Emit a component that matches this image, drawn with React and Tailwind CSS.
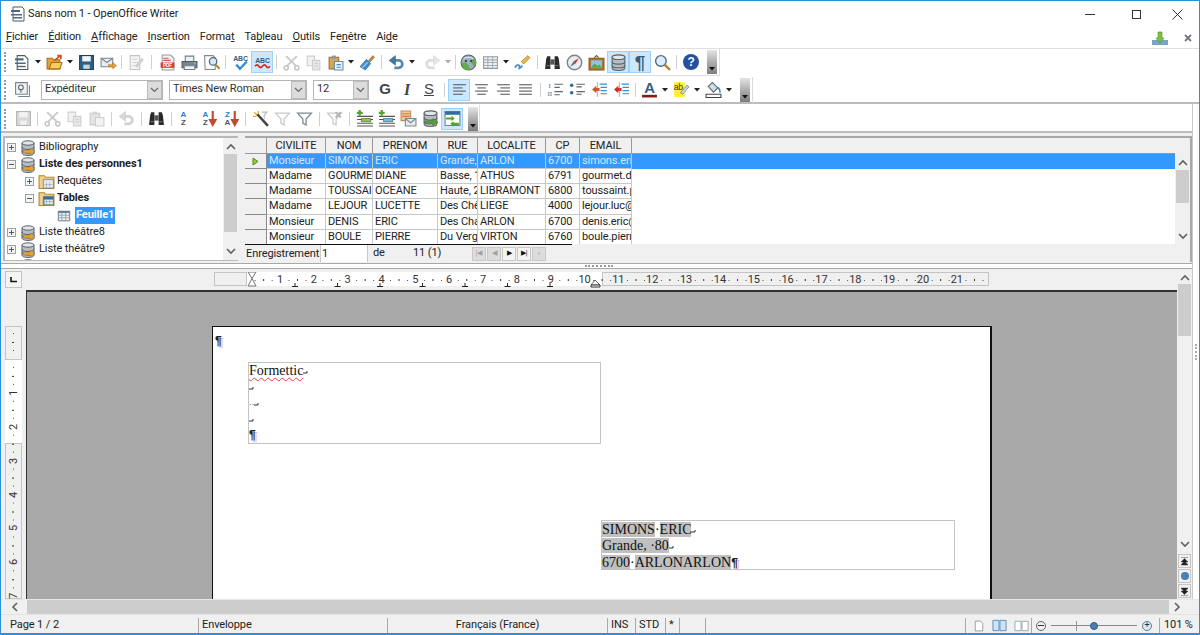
import React from 'react'
import clsx from 'clsx'

const S = ({ children, s = 17 }) => (
  <svg width={s} height={s} viewBox="0 0 16 16" className="block shrink-0">
    {children}
  </svg>
)

const Caret = ({ dim }) => (
  <div className="w-[10px] h-[22px] flex items-center justify-center">
    <svg width="6" height="4" viewBox="0 0 6 4">
      <path d="M0 0h6L3 3.5z" fill={dim ? '#aaa' : '#222'} />
    </svg>
  </div>
)

const Sep = ({ className }) => (
  <div className={clsx('flex justify-center h-[22px] items-center', className)}>
    <div className="w-px h-[14px] bg-[#cfcfcf]" />
  </div>
)

const Btn = ({ active, children, className }) => (
  <div
    className={clsx(
      'w-[22px] h-[22px] shrink-0 flex items-center justify-center',
      active && 'bg-[#cce8ff] border border-[#99d1ff]',
      className,
    )}
  >
    {children}
  </div>
)

const Handle = ({ className }) => (
  <div className={clsx('w-[10px] h-[24px] bg-gradient-to-b from-[#e4e4e4] to-[#7d7d7d] flex items-end justify-center pb-[3px]', className)}>
    <svg width="6" height="4" viewBox="0 0 6 4">
      <path d="M0 0h6L3 3.5z" fill="#111" />
    </svg>
  </div>
)

const Grip = () => (
  <div className="w-[3px] h-[20px] ml-[3px] mr-[4px] shrink-0 border-l-2 border-dotted border-[#9a9a9a]" />
)

const NewDoc = () => (
  <S>
    <path d="M3 1.5h7l3 3v10H3z" fill="#fff" stroke="#4a5a68" />
    <path d="M1 4h8v2H1zM1 8h10v1.5H1zM3 11h8v1.5H3z" fill="#51697e" />
  </S>
)
const Open = () => (
  <S>
    <path d="M1 4h5l1 1.5h6V14H1z" fill="#e2a13a" stroke="#a86f17" />
    <path d="M3 14l2-6h10l-2 6z" fill="#f7cb5f" stroke="#a86f17" />
    <path d="M8 6l5-4M10.5 1.5H14V5" stroke="#d8501e" strokeWidth="1.6" fill="none" />
  </S>
)
const Save = ({ dim }) => (
  <S>
    <path d="M1.5 1.5h13v13h-13z" fill={dim ? '#d8d8d8' : '#2e5f84'} stroke={dim ? '#b5b5b5' : '#20435f'} />
    <path d="M4 2h8v5H4z" fill={dim ? '#f2f2f2' : '#f2f6f9'} />
    <path d="M5 10h6v4H5z" fill={dim ? '#f2f2f2' : '#c6d4de'} />
  </S>
)
const Mail = () => (
  <S>
    <path d="M1 4h11v8H1z" fill="#e8edf0" stroke="#7b8790" />
    <path d="M1 4l5.5 4L12 4" fill="none" stroke="#7b8790" />
    <path d="M8 10h4V8l3.5 3-3.5 3v-2H8z" fill="#e7a22e" stroke="#a86f17" strokeWidth=".5" />
  </S>
)
const EditDoc = () => (
  <S>
    <path d="M3 1.5h9v13H3z" fill="#f4f4f4" stroke="#c4c4c4" />
    <path d="M5 5h5M5 8h5M5 11h3" stroke="#d0d0d0" />
    <path d="M8 11l6-7 1.5 1.5-6 7z" fill="#d6d6d6" stroke="#b5b5b5" strokeWidth=".5" />
  </S>
)
const Pdf = () => (
  <S>
    <path d="M3 1h8l3 3v11H3z" fill="#f4f4f4" stroke="#9a9a9a" />
    <path d="M1.5 8h13v5h-13z" fill="#d33c30" />
    <path d="M4 4h5M4 6h7" stroke="#c05a50" />
    <text x="8" y="12.3" fontSize="4.5" fontWeight="700" textAnchor="middle" fill="#fff" fontFamily="Liberation Sans">PDF</text>
  </S>
)
const Print = () => (
  <S>
    <path d="M4 2h8v5H4z" fill="#eef2f4" stroke="#6d7d89" />
    <path d="M1 7h14v6H1z" fill="#77858f" stroke="#4d5a63" />
    <path d="M3 11h10v3.5H3z" fill="#f2f2f2" stroke="#6d7d89" />
    <path d="M12 8.5h2" stroke="#8fe06c" />
  </S>
)
const Preview = () => (
  <S>
    <path d="M1.5 1.5h8l2 2v11h-9.500z" fill="#fff" stroke="#7d8a93" />
    <circle cx="9.500" cy="7" r="3.500" fill="#d3e9f7" stroke="#51697e" strokeWidth="1.200" />
    <path d="M12 10l3.500 4" stroke="#b4812e" strokeWidth="2" />
  </S>
)
const Spell = () => (
  <S>
    <text x="8" y="6.500" fontSize="6.500" fontWeight="700" textAnchor="middle" fill="#2e5f84" fontFamily="Liberation Sans">ABC</text>
    <path d="M4 10l3.500 4L14 7" stroke="#2f8fd8" strokeWidth="2.200" fill="none" />
  </S>
)
const AutoSpell = () => (
  <S>
    <text x="8" y="8" fontSize="6.500" fontWeight="700" textAnchor="middle" fill="#2e5f84" fontFamily="Liberation Sans">ABC</text>
    <path d="M1 11.500q2-2.500 3.500 0t3.500 0 3.500 0 3.500 0" stroke="#d8281e" strokeWidth="1.600" fill="none" />
  </S>
)
const Cut = () => (
  <S>
    <path d="M3 2l9 9M13 2l-9 9" stroke="#c9c9c9" strokeWidth="1.800" />
    <circle cx="3" cy="13" r="2" fill="none" stroke="#c4c4c4" strokeWidth="1.400" />
    <circle cx="13" cy="13" r="2" fill="none" stroke="#c4c4c4" strokeWidth="1.400" />
  </S>
)
const Copy = () => (
  <S>
    <path d="M2 2h7v9H2z" fill="#f2f2f2" stroke="#cdcdcd" />
    <path d="M7 6h7v9H7z" fill="#e6e6e6" stroke="#cdcdcd" />
    <path d="M9 9h3M9 11h3" stroke="#cdcdcd" />
  </S>
)
const Paste = ({ dim }) => (
  <S>
    <path d="M2 3h9v11H2z" fill={dim ? '#e4e4e4' : '#d9a655'} stroke={dim ? '#c9c9c9' : '#96702f'} />
    <path d="M4.500 1.500h4v3h-4z" fill={dim ? '#d2d2d2' : '#8b98a2'} />
    <path d="M7 7h8v8H7z" fill={dim ? '#f2f2f2' : '#eef4f8'} stroke={dim ? '#cdcdcd' : '#6b8aa2'} />
    {!dim && <path d="M9 10h4M9 12.500h4" stroke="#3a8fd0" />}
  </S>
)
const Brush = () => (
  <S>
    <path d="M9 6l4-4.500 1.500 1.500L10.500 7.500z" fill="#c08a3a" stroke="#805a20" strokeWidth=".5" />
    <path d="M1 12l6-7 4 4-5 6z" fill="#3f8fd0" stroke="#28608c" strokeWidth=".6" />
    <path d="M3 13l5-5" stroke="#a7d3f2" />
  </S>
)
const Undo = ({ dim }) => (
  <S>
    <path d="M5 6h5a3 3 0 0 1 0 7H6" fill="none" stroke={dim ? '#d2d2d2' : '#5a8ab4'} strokeWidth="2.600" />
    <path d="M7 1.500v9L1 6z" fill={dim ? '#d8d8d8' : '#3f78a8'} stroke={dim ? '#c4c4c4' : '#2e5f84'} strokeWidth=".5" />
  </S>
)
const Redo = () => (
  <S>
    <path d="M11 6H6a3 3 0 0 0 0 7h4" fill="none" stroke="#dcdcdc" strokeWidth="2.600" />
    <path d="M9 1.500v9L15 6z" fill="#e6e6e6" stroke="#cfcfcf" strokeWidth=".5" />
  </S>
)
const Globe = () => (
  <S>
    <circle cx="8" cy="8" r="7" fill="#9db0bc" stroke="#51626e" />
    <path d="M1.500 9q3-2 5 0t3 5q-1 1-2 1C4 15 1.500 12 1.500 9zM10 6q2-2 5-.5 .5 3-1 6-3-1-4-5.500z" fill="#62ad4a" />
    <path d="M3.500 4.500q4.500-3 9 0" stroke="#e6edf1" fill="none" />
    <circle cx="5.500" cy="6.500" r="1.100" fill="#3d4a54" />
    <circle cx="10.500" cy="6.500" r="1.100" fill="#3d4a54" />
  </S>
)
const TableI = () => (
  <S>
    <path d="M1.500 2.500h13v11h-13z" fill="#eef1f3" stroke="#8f9ba5" />
    <path d="M1.500 5.500h13M1.500 8h13M1.500 10.800h13M5.500 2.500v11M10 2.500v11" stroke="#a5afb7" />
  </S>
)
const Draw = () => (
  <S>
    <path d="M7 7l6-5.500 2 2-6 6z" fill="#f0b53d" stroke="#a06f1c" strokeWidth=".6" />
    <path d="M1 13q1-3 3-2.500T5 13t3-2" stroke="#3f8fd0" strokeWidth="1.600" fill="none" />
  </S>
)
const Binoculars = () => (
  <S>
    <path d="M1 14l1-9 1-3h3v12zM15 14l-1-9-1-3h-3v12z" fill="#2a2a2a" />
    <path d="M6 5h4v5H6z" fill="#555" />
    <path d="M2.500 11h3M10.500 11h3" stroke="#777" />
  </S>
)
const Compass = () => (
  <S>
    <circle cx="8" cy="8" r="6.800" fill="#e9edf0" stroke="#78868f" strokeWidth="1.300" />
    <path d="M12 4L7 7l2 2z" fill="#d8281e" />
    <path d="M4 12l3-5 2 2z" fill="#3f78a8" />
  </S>
)
const Frame = () => (
  <S>
    <path d="M1 4h14v11H1z" fill="#b07a33" stroke="#7c5218" />
    <path d="M3 6h10v7H3z" fill="#8ec4e8" />
    <path d="M3 13l3-4 3 2 2-1 2 3z" fill="#5ea640" />
    <path d="M6 3.500l2-2 2 2" stroke="#7c5218" fill="none" />
  </S>
)
const Db = ({ arrows, s }) => (
  <S s={s}>
    <path d="M2 3v10c0 1.500 2.500 2.500 6 2.500s6-1 6-2.500V3z" fill="#b5bcc2" stroke="#59636b" />
    <ellipse cx="8" cy="3" rx="6" ry="2.200" fill="#e2e6e9" stroke="#59636b" />
    <path d="M2 7c0 1.500 2.500 2.500 6 2.500S14 8.500 14 7M2 10.500c0 1.500 2.500 2.500 6 2.500s6-1 6-2.500" fill="none" stroke="#59636b" />
    {arrows && <path d="M3 10h7V8l5 3.500-5 3.500v-2H3z" fill={arrows} stroke="#555" strokeWidth=".3" />}
  </S>
)
const Pilcrow = () => (
  <span className="font-['Liberation_Sans'] text-[19px] leading-none font-bold text-[#3d5c74]">¶</span>
)
const Glass = () => (
  <S>
    <circle cx="6.500" cy="6.500" r="5" fill="#d9eefb" stroke="#51697e" strokeWidth="1.300" />
    <path d="M10 10l5 5" stroke="#b4812e" strokeWidth="2.200" />
  </S>
)
const Help = () => (
  <div className="w-[16px] h-[16px] rounded-full bg-[#24509e] flex items-center justify-center text-white text-[12px] font-bold leading-none font-['Liberation_Sans']">?</div>
)
const StyleI = () => (
  <S>
    <path d="M1.500 1.500h11v11h-11z" fill="#f2f2f2" stroke="#77848e" />
    <path d="M4 14.500h10.500V4" fill="none" stroke="#77848e" />
    <circle cx="6.500" cy="6" r="2.200" fill="none" stroke="#5a6a76" />
    <path d="M6.500 8v3" stroke="#5a6a76" />
  </S>
)
const Align = ({ w }) => (
  <S>
    {w.map((l, i) => (
      <path key={i} d={l} stroke="#666" strokeWidth="1.100" />
    ))}
  </S>
)
const Numbered = () => (
  <S>
    <text x="2.500" y="7" fontSize="6.500" fill="#2e6f9e" textAnchor="middle" fontFamily="Liberation Serif">I</text>
    <text x="2.500" y="14" fontSize="6.500" fill="#2e6f9e" textAnchor="middle" fontFamily="Liberation Serif">II</text>
    <path d="M7 3h8M7 6h5M7 10h8M7 13h5" stroke="#666" />
  </S>
)
const Bullets = () => (
  <S>
    <circle cx="2.500" cy="4" r="1.700" fill="#2e6f9e" />
    <circle cx="2.500" cy="11" r="1.700" fill="#2e6f9e" />
    <path d="M7 3h8M7 5.500h5M7 10h8M7 12.500h5" stroke="#666" />
  </S>
)
const Indent = ({ color = '#d8501e' }) => (
  <S>
    <path d="M1 8l4-3.500v2h3v3H5v2z" fill={color} />
    <path d="M8 3h7M9 6h6M9 9h6M9 12h6" stroke="#2f8fd8" strokeWidth="1.100" />
    <path d="M6 1v14" stroke="#888" strokeWidth=".6" />
  </S>
)
const FontColor = () => (
  <S>
    <text x="8" y="11" fontSize="14" fontWeight="700" textAnchor="middle" fill="#2e5f84" fontFamily="Liberation Sans">A</text>
    <path d="M1 13h14v2.500H1z" fill="#8b1a14" />
  </S>
)
const Highlight = () => (
  <S>
    <path d="M1 1h10v14H1z" fill="#ffec3d" />
    <text x="5" y="8" fontSize="8" textAnchor="middle" fill="#333" fontFamily="Liberation Sans">ab</text>
    <path d="M7 11l6-7 2 1.500-6 7z" fill="#cfd6db" stroke="#5a6a76" strokeWidth=".6" />
  </S>
)
const Bucket = () => (
  <S>
    <path d="M3 5l4-3.500 5 5-4 4z" fill="#d6dcdf" stroke="#5a6a76" />
    <path d="M12 6q2.500 2 2 5" stroke="#2f8fd8" strokeWidth="1.500" fill="none" />
    <path d="M1 12.500h14v3H1z" fill="#fff" stroke="#444" />
  </S>
)
const Sort = ({ a = 'A', b = 'Z', arrow }) => (
  <S>
    <text x="5" y="7" fontSize="7.500" fontWeight="700" textAnchor="middle" fill="#2f7fc0" fontFamily="Liberation Sans">{a}</text>
    <text x="5" y="14.500" fontSize="7.500" fontWeight="700" textAnchor="middle" fill="#555" fontFamily="Liberation Sans">{b}</text>
    {arrow && <path d="M12 1v9M9.500 9.500L12 14l2.500-4.500z" stroke="#c4492a" strokeWidth="2" fill="#c4492a" />}
  </S>
)
const Wand = () => (
  <S>
    <path d="M2 2l3 3M6 1v3M1 6h3" stroke="#e2b030" strokeWidth="1.200" />
    <path d="M5 4l10 11" stroke="#444" strokeWidth="2.400" />
    <path d="M9 2h5l-2.500 3v4" stroke="#b5bcc2" fill="none" />
  </S>
)
const Funnel = ({ dim, x }) => (
  <S>
    <path d="M1.500 3h13L9.500 8.500V14l-3-1.500v-4z" fill="#fff" stroke={dim ? '#c9c9c9' : '#7d8a93'} strokeWidth="1.200" />
    {x && <path d="M9 2l5 5M14 2l-5 5" stroke="#b5b5b5" strokeWidth="1.800" />}
  </S>
)
const ListAdd = ({ color = '#8cc63f' }) => (
  <S>
    <path d="M1 6h15M1 9h15M1 12.500h15M1 15h15" stroke="#555" />
    <path d="M5 8h9v3H5z" fill={color} stroke="#444" strokeWidth=".5" />
    <path d="M3.500 0v5.500M.8 2.700h5.500" stroke="#4fa528" strokeWidth="2" />
  </S>
)
const MergeMail = () => (
  <S>
    <path d="M1 1h9v9H1z" fill="#f3c79b" stroke="#c08a5a" />
    <path d="M2 3.500h7M2 6h7" stroke="#d07a3a" />
    <path d="M5 8h10v7H5z" fill="#e6ebee" stroke="#7b8790" />
    <path d="M5 8l5 4 5-4" fill="none" stroke="#7b8790" />
  </S>
)
const Exchange = () => (
  <S>
    <path d="M1 1.500h14v13H1z" fill="#fff" stroke="#708090" />
    <path d="M1 1.500h14v3H1z" fill="#2e6f9e" />
    <path d="M2 7h5V5.500L10 8 7 10.500V9H2zM14 12H9v-1.500L6 13l3 2.500V14h5z" fill="#4fa528" />
  </S>
)

const Combo = ({ value, className }) => (
  <div className={clsx('h-[20px] flex items-center border border-[#b5b5b5] bg-white shrink-0', className)}>
    <span className="pl-[3px] flex-1 truncate text-[#333]">{value}</span>
    <div className="w-[15px] h-[18px] bg-[#dcdcdc] border border-[#bcbcbc] flex items-center justify-center">
      <svg width="9" height="6" viewBox="0 0 9 6">
        <path d="M1 1l3.500 3.500L8 1" fill="none" stroke="#666" strokeWidth="1.200" />
      </svg>
    </div>
  </div>
)

const Chevron = ({ dir = 'down' }) => (
  <svg width="10" height="7" viewBox="0 0 10 7" className="block">
    <path d={dir === 'up' ? 'M1 6l4-4 4 4' : 'M1 1l4 4 4-4'} fill="none" stroke="#606060" strokeWidth="1.600" />
  </svg>
)

const Plus = ({ open }) => (
  <div className="w-[9px] h-[9px] border border-[#a0a0a0] bg-[#f4f4f4] flex items-center justify-center shrink-0">
    <svg width="7" height="7" viewBox="0 0 7 7">
      <path d={open ? 'M1 3.500h5' : 'M1 3.500h5M3.500 1v5'} stroke="#3a5f80" />
    </svg>
  </div>
)

const Folder = ({ inner }) => (
  <S s={17}>
    <path d="M1 2.500h5l1 1.500h8v10.500H1z" fill="#f2d28a" stroke="#b3862f" />
    <path d="M5 6h9.500v8H5z" fill={inner ? '#2e6f9e' : '#dfe6ea'} stroke="#6b7a85" strokeWidth=".7" />
    <path d="M6 9h8v4.500H6z" fill="#eef1f3" />
    <path d="M8 9v4.500M11 9v4.500M6 11h8" stroke="#8f9ba5" strokeWidth=".6" />
  </S>
)

const TreeRow = ({ indent, icon, children, className }) => (
  <div className={clsx('h-[17px] flex items-center shrink-0', indent, className)}>
    {icon}
    {children}
  </div>
)

const DbTree = () => (
  <div className="ml-[4px] mr-[3px]">
    <Db arrows="#e7a22e" s={16} />
  </div>
)

const columns = ['CIVILITE', 'NOM', 'PRENOM', 'RUE', 'LOCALITE', 'CP', 'EMAIL']
const rows = [
  ['Monsieur', 'SIMONS', 'ERIC', 'Grande, 80', 'ARLON', '6700', 'simons.eric@gmail.com'],
  ['Madame', 'GOURMET', 'DIANE', 'Basse, 12', 'ATHUS', '6791', 'gourmet.diane@gmail.com'],
  ['Madame', 'TOUSSAINT', 'OCEANE', 'Haute, 23', 'LIBRAMONT', '6800', 'toussaint.p@gmail.com'],
  ['Madame', 'LEJOUR', 'LUCETTE', 'Des Chênes', 'LIEGE', '4000', 'lejour.luc@gmail.com'],
  ['Monsieur', 'DENIS', 'ERIC', 'Des Champs', 'ARLON', '6700', 'denis.eric@gmail.com'],
  ['Monsieur', 'BOULE', 'PIERRE', 'Du Verger', 'VIRTON', '6760', 'boule.pierre@gmail.com'],
]
const gridCols = 'grid grid-cols-[22px_59px_47px_65px_40px_68px_34px_52px_1fr]'

const menus = [
  ['F', 'ichier', ''],
  ['É', 'dition', ''],
  ['A', 'ffichage', ''],
  ['I', 'nsertion', ''],
  ['', 'Forma', 't'],
  ['', 'Ta', 'b', 'leau'],
  ['O', 'utils', ''],
  ['', 'Fe', 'n', 'être'],
  ['', 'Ai', 'd', 'e'],
]

const Menu = ({ m }) =>
  m[0] ? (
    <span>
      <u>{m[0]}</u>
      {m[1]}
    </span>
  ) : (
    <span>
      {m[1]}
      <u>{m[2]}</u>
      {m[3]}
    </span>
  )

const hNums = [1, 2, 3, 4, 5, 6, 7, 8, 9, 10, 11, 12, 13, 14, 15, 16, 17, 18, 19, 20, 21]
const vNums = [1, 2, 3, 4, 5, 6, 7]

const HRuler = () => {
  const ticks = []
  for (let i = -1; i < 22; i++) {
    const x = 66 + i * 33.85
    ticks.push(
      <g key={i}>
        <rect x={x + 8.5} y="8" width="1" height="1" fill="#555" />
        <rect x={x + 17} y="7" width="1" height="2" fill="#333" />
        <rect x={x + 25.5} y="8" width="1" height="1" fill="#555" />
      </g>,
    )
  }
  const tabs = [295, 337.5, 380, 422.5, 465, 507.5, 550].map((x) => (
    <path key={x} d={`M${x - 214} 11v3.500M${x - 217} 14.500h6`} stroke="#222" fill="none" />
  ))
  return (
    <div className="w-[775px] h-[14px] relative flex bg-white shrink-0">
      <div className="w-[33px] bg-[#f0f0f0] border border-[#c4c4c4]" />
      <div className="w-[355px]" />
      <div className="flex-1 bg-[#f0f0f0] border border-[#c4c4c4]" />
      <svg width="775" height="16" viewBox="0 0 775 16" className="absolute left-0 top-0">
        {ticks}
        {tabs}
        <path d="M34 0h8l-4 6.500 4 7.500h-8l4-7.500z" fill="#fff" stroke="#777" />
        <path d="M381 8l5 5h-9z" fill="#fff" stroke="#666" />
        <path d="M377 13h9v2h-9z" fill="#fff" stroke="#333" />
      </svg>
      <div className="absolute left-[49px] top-0 flex h-[14px] items-center">
        {hNums.map((n) => (
          <div key={n} className="w-[33.85px] text-center text-[11px] leading-none text-[#333]">
            {n}
          </div>
        ))}
      </div>
    </div>
  )
}

const VRuler = () => {
  const ticks = []
  for (let i = 0; i < 9; i++) {
    const y = 0 + i * 33.9
    ticks.push(
      <g key={i}>
        <rect x="8" y={y + 7} width="1" height="1" fill="#555" />
        <rect x="7" y={y + 16} width="2" height="1" fill="#333" />
        <rect x="8" y={y + 24} width="1" height="1" fill="#555" />
      </g>,
    )
  }
  return (
    <div className="ml-[4px] w-[17px] flex-1 relative flex flex-col bg-white overflow-hidden">
      <div className="h-[34px] bg-[#f0f0f0] border border-[#c4c4c4]" />
      <div className="h-[83px]" />
      <div className="flex-1 bg-[#f0f0f0] border border-[#c4c4c4]" />
      <svg width="17" height="280" viewBox="0 0 17 280" className="absolute left-0 top-0">
        {ticks}
      </svg>
      <div className="absolute left-0 top-[50px] flex flex-col w-[17px]">
        {vNums.map((n) => (
          <div key={n} className="h-[33.9px] flex items-center justify-center text-[11px] leading-none text-[#333]">
            <span className="[writing-mode:vertical-rl] rotate-180">{n}</span>
          </div>
        ))}
      </div>
    </div>
  )
}

const Mark = () => (
  <svg width="6" height="6" viewBox="0 0 6 6" className="inline-block">
    <path d="M0 4h4M4 2v2" stroke="#333" fill="none" />
  </svg>
)

const Para = () => (
  <span className="font-['Liberation_Sans'] font-bold text-[12px] leading-none text-[#222] [text-shadow:2px_2px_0_#e8b8b8]">¶</span>
)

const StatusSep = ({ className }) => <div className={clsx('w-px h-[15px] bg-[#a8a8a8] shrink-0', className)} />

export default function App() {
  return (
    <div className="w-[1200px] h-[635px] overflow-hidden flex flex-col bg-white border-t border-x border-b-2 border-[#2b90d9] text-[11px] tracking-[-0.1px] text-[#222] font-['Roboto',sans-serif]">
      <div className="h-[26px] shrink-0 flex items-center pl-[9px]">
        <S s={16}>
          <path d="M3 1h9l2 2v12H3z" fill="#fff" stroke="#4a5a68" />
          <path d="M1 4h9v2H1zM1 8h11v1.500H1zM3 11h9v1.500H3z" fill="#51697e" />
        </S>
        <span className="ml-[2px] text-[#222]">Sans nom 1 - OpenOffice Writer</span>
        <div className="ml-auto flex items-center">
          <div className="w-[46px] flex justify-center">
            <div className="w-[10px] h-px bg-[#333]" />
          </div>
          <div className="w-[46px] flex justify-center">
            <div className="w-[9px] h-[9px] border border-[#333]" />
          </div>
          <div className="w-[37px] mr-[3px] flex justify-center">
            <svg width="11" height="11" viewBox="0 0 11 11">
              <path d="M.5.500l10 10M10.500.500l-10 10" stroke="#333" />
            </svg>
          </div>
        </div>
      </div>

      <div className="h-[22px] shrink-0 flex items-center border-b border-[#e0e0e0] pl-[5px] gap-[10px]">
        {menus.map((m, i) => (
          <Menu key={i} m={m} />
        ))}
        <div className="ml-auto flex items-center">
          <S s={16}>
            <path d="M0 10h16v5H0z" fill="#7ba3c4" />
            <path d="M4 8l4 5 4-5H10V2H6v6z" fill="#7dc242" stroke="#4e8a1e" strokeWidth=".6" />
          </S>
          <svg width="8" height="8" viewBox="0 0 8 8" className="ml-[16px] mr-[7px]">
            <path d="M1 1l6 6M7 1L1 7" stroke="#6a7a88" strokeWidth="1.800" />
          </svg>
        </div>
      </div>

      <div className="h-[27px] shrink-0 flex items-center">
        <div className="flex items-center h-[27px] pr-[2px] border-r border-b border-[#dcdcdc]">
          <Grip />
          <Btn><NewDoc /></Btn>
          <Caret />
          <Btn><Open /></Btn>
          <Caret />
          <Btn><Save /></Btn>
          <Btn><Mail /></Btn>
          <Sep className="w-[5px]" />
          <Btn><EditDoc /></Btn>
          <Sep className="w-[10px]" />
          <Btn><Pdf /></Btn>
          <Btn><Print /></Btn>
          <Btn><Preview /></Btn>
          <Sep className="w-[7px]" />
          <Btn><Spell /></Btn>
          <Btn active><AutoSpell /></Btn>
          <Sep className="w-[7px]" />
          <Btn><Cut /></Btn>
          <Btn><Copy /></Btn>
          <Btn><Paste /></Btn>
          <Caret />
          <Btn><Brush /></Btn>
          <Sep className="w-[7px]" />
          <Btn><Undo /></Btn>
          <Caret />
          <Btn className="ml-[4px]"><Redo /></Btn>
          <Caret dim />
          <Sep className="w-[4px]" />
          <Btn><Globe /></Btn>
          <Btn><TableI /></Btn>
          <Caret />
          <Btn><Draw /></Btn>
          <Sep className="w-[8px]" />
          <Btn><Binoculars /></Btn>
          <Btn><Compass /></Btn>
          <Btn><Frame /></Btn>
          <Btn active><Db /></Btn>
          <Btn active><Pilcrow /></Btn>
          <Btn><Glass /></Btn>
          <Sep className="w-[7px]" />
          <Btn><Help /></Btn>
          <Handle className="ml-[5px]" />
        </div>
      </div>

      <div className="h-[28px] shrink-0 flex items-center border-b-2 border-[#bcbcbc] pt-[1px]">
        <div className="flex items-center h-[26px] pr-[2px] border-r border-[#dcdcdc]">
          <Grip />
          <Btn><StyleI /></Btn>
          <Combo value="Expéditeur" className="w-[122px] ml-[8px]" />
          <Combo value="Times New Roman" className="w-[138px] ml-[6px]" />
          <Combo value="12" className="w-[56px] ml-[6px]" />
          <Btn className="ml-[5px] font-['Liberation_Sans'] text-[15px] font-bold text-[#444]">G</Btn>
          <Btn className="font-['Liberation_Serif'] text-[16px] italic font-bold text-[#444]">I</Btn>
          <Btn className="font-['Liberation_Sans'] text-[15px] underline text-[#444]">S</Btn>
          <Sep className="w-[8px]" />
          <Btn active><Align w={['M2 3.500h12', 'M2 6.500h9', 'M2 9.500h12', 'M2 12.500h9']} /></Btn>
          <Btn><Align w={['M2 3.500h12', 'M4 6.500h8', 'M2 9.500h12', 'M4 12.500h8']} /></Btn>
          <Btn><Align w={['M2 3.500h12', 'M5 6.500h9', 'M2 9.500h12', 'M5 12.500h9']} /></Btn>
          <Btn><Align w={['M2 3.500h12', 'M2 6.500h12', 'M2 9.500h12', 'M2 12.500h12']} /></Btn>
          <Sep className="w-[8px]" />
          <Btn><Numbered /></Btn>
          <Btn><Bullets /></Btn>
          <Btn><Indent /></Btn>
          <Btn><Indent color="#d8281e" /></Btn>
          <Sep className="w-[6px]" />
          <Btn><FontColor /></Btn>
          <Caret />
          <Btn><Highlight /></Btn>
          <Caret />
          <Btn><Bucket /></Btn>
          <Caret />
          <Handle className="ml-[6px]" />
        </div>
      </div>

      <div className="flex-1 min-h-0 flex">
        <div className="flex-1 min-w-0 flex flex-col">
          <div className="h-[29px] shrink-0 flex items-center border-b-2 border-[#bcbcbc] pt-[2px]">
            <div className="flex items-center h-[27px] border-r border-[#dcdcdc] pr-[1px]">
              <Grip />
              <Btn className="ml-[1px]"><Save dim /></Btn>
              <Sep className="w-[7px]" />
              <Btn><Cut /></Btn>
              <Btn><Copy /></Btn>
              <Btn><Paste dim /></Btn>
              <Sep className="w-[8px]" />
              <Btn><Undo dim /></Btn>
              <Sep className="w-[8px]" />
              <Btn><Binoculars /></Btn>
              <Sep className="w-[8px]" />
              <Btn><Sort /></Btn>
              <Btn><Sort arrow /></Btn>
              <Btn><Sort a="Z" b="A" arrow /></Btn>
              <Sep className="w-[8px]" />
              <Btn><Wand /></Btn>
              <Btn><Funnel dim /></Btn>
              <Btn><Funnel /></Btn>
              <Sep className="w-[8px]" />
              <Btn><Funnel dim x /></Btn>
              <Sep className="w-[8px]" />
              <Btn><ListAdd /></Btn>
              <Btn><ListAdd color="#6cb8ee" /></Btn>
              <Btn><MergeMail /></Btn>
              <Btn><Db arrows="#4fa528" /></Btn>
              <Btn active><Exchange /></Btn>
              <Handle className="ml-[5px]" />
            </div>
          </div>

          <div className="h-[131px] shrink-0 bg-[#f0f0f0] flex pt-[3px] pl-[2px] border-b border-[#a8a8a8]">
            <div className="w-[235px] h-[125px] bg-white border-t-2 border-l-2 border-b border-[#b8b8b8] flex overflow-hidden">
              <div className="flex-1 flex flex-col pl-[2px] mt-[1px] overflow-hidden">
                <TreeRow icon={<Plus />}><DbTree /><span>Bibliography</span></TreeRow>
                <TreeRow icon={<Plus open />}><DbTree /><span className="font-bold">Liste des personnes1</span></TreeRow>
                <TreeRow indent="pl-[18px]" icon={<Plus />}>
                  <div className="ml-[4px]"><Folder /></div>
                  <span className="ml-[2px]">Requêtes</span>
                </TreeRow>
                <TreeRow indent="pl-[18px]" icon={<Plus open />}>
                  <div className="ml-[4px]"><Folder inner /></div>
                  <span className="ml-[2px] font-bold">Tables</span>
                </TreeRow>
                <TreeRow indent="pl-[50px]" icon={<S s={14}><path d="M1.500 2.500h13v11h-13z" fill="#eef1f3" stroke="#5e6c78" /><path d="M1.500 2.500h13v2h-13z" fill="#5e7a92" /><path d="M1.500 7h13M1.500 10h13M5.500 4.500v9M10 4.500v9" stroke="#8f9ba5" /></S>}>
                  <span className="ml-[4px] bg-[#3399ff] text-white font-bold px-[1px]">Feuille1</span>
                </TreeRow>
                <TreeRow icon={<Plus />}><DbTree /><span>Liste théâtre8</span></TreeRow>
                <TreeRow icon={<Plus />}><DbTree /><span>Liste théâtre9</span></TreeRow>
                <TreeRow icon={<div className="w-[9px]" />}><DbTree /></TreeRow>
              </div>
              <div className="w-[15px] bg-[#f0f0f0] flex flex-col items-center shrink-0">
                <div className="h-[16px] flex items-center"><Chevron dir="up" /></div>
                <div className="w-[13px] h-[78px] bg-[#cdcdcd]" />
                <div className="flex-1" />
                <div className="h-[17px] flex items-center"><Chevron /></div>
              </div>
            </div>

            <div className="ml-[7px] flex-1 min-w-0 flex flex-col border-t-2 border-r-2 border-[#a8a8a8] mb-[1px]">
              <div className="flex-1 flex min-h-0">
                <div className="flex-1 min-w-0 flex flex-col">
                  <div className={clsx(gridCols, 'h-[16px] shrink-0 bg-[#f0f0f0]')}>
                    <div className="border-r border-b border-[#9a9a9a]" />
                    {columns.map((c) => (
                      <div key={c} className="border-r border-b border-[#9a9a9a] text-center leading-[15px] overflow-hidden">
                        {c}
                      </div>
                    ))}
                    <div className="border-b border-[#9a9a9a]" />
                  </div>
                  <div className="flex-1 bg-white min-h-0 overflow-hidden">
                    {rows.map((r, i) => (
                      <div key={i} className={clsx(gridCols, 'h-[15.170px]', i === 0 && 'bg-[#3399ff] text-[#d3e8ff]')}>
                        <div className="bg-[#f0f0f0] border-r border-b border-[#8a8a8a] flex items-center justify-center">
                          {i === 0 && (
                            <svg width="7" height="9" viewBox="0 0 7 9">
                              <path d="M1 1l5 3.500L1 8z" fill="#9ccc3c" stroke="#4e8a1e" />
                            </svg>
                          )}
                        </div>
                        {r.map((v, j) => (
                          <div key={j} className="border-r border-b border-[#c8c8c8] px-[2px] leading-[14px] overflow-hidden whitespace-nowrap">
                            {v}
                          </div>
                        ))}
                        <div />
                      </div>
                    ))}
                  </div>
                </div>
                <div className="w-[15px] shrink-0 bg-[#f0f0f0] flex flex-col items-center pt-[16px]">
                  <div className="h-[16px] flex items-center"><Chevron dir="up" /></div>
                  <div className="w-[13px] h-[33px] bg-[#cdcdcd]" />
                  <div className="flex-1" />
                  <div className="h-[16px] flex items-center"><Chevron /></div>
                </div>
              </div>
              <div className="h-[18px] shrink-0 flex items-center bg-[#f0f0f0]">
                <div className="w-[327px] h-[18px] shrink-0 border-t border-[#111] flex items-center">
                  <span className="pl-[1px] w-[76px] border-r border-[#c8c8c8] h-[17px] leading-[17px] whitespace-nowrap">Enregistrement</span>
                  <span className="w-[47px] bg-white border-r border-[#c8c8c8] h-[17px] leading-[17px] pl-[1px]">1</span>
                  <span className="pl-[5px] w-[45px]">de</span>
                  <span className="w-[59px]">11 (1)</span>
                  <div className="flex gap-px">
                    <div className="w-[14px] h-[14px] bg-[#dcdcdc] border border-[#c8c8c8] text-[#a0a0a0] flex items-center justify-center text-[7px]">|◀</div>
                    <div className="w-[14px] h-[14px] bg-[#dcdcdc] border border-[#c8c8c8] text-[#a0a0a0] flex items-center justify-center text-[7px]">◀</div>
                    <div className="w-[14px] h-[14px] bg-[#f4f4f4] border border-[#c8c8c8] text-[#111] flex items-center justify-center text-[7px]">▶</div>
                    <div className="w-[14px] h-[14px] bg-[#f4f4f4] border border-[#c8c8c8] text-[#111] flex items-center justify-center text-[7px]">▶|</div>
                    <div className="w-[14px] h-[14px] bg-[#dcdcdc] border border-[#c8c8c8] text-[#bbb] flex items-center justify-center text-[8px]">+</div>
                  </div>
                </div>
              </div>
            </div>
          </div>

          <div className="h-[5px] shrink-0 bg-white flex items-center justify-center border-b border-[#a8a8a8]">
            <div className="w-[28px] border-t-2 border-dotted border-[#999] ml-[4px]" />
          </div>

          <div className="flex-1 min-h-0 flex">
            <div className="w-[25px] shrink-0 bg-[#f0f0f0] flex flex-col">
              <div className="h-[21px] shrink-0 pt-[2px] pl-[4px]">
                <div className="w-[17px] h-[17px] border border-[#c4c4c4] bg-[#f4f4f4] flex items-center justify-center">
                  <svg width="8" height="6" viewBox="0 0 8 6">
                    <path d="M1 0v4.500h6" fill="none" stroke="#111" strokeWidth="1.600" />
                  </svg>
                </div>
              </div>
              <div className="flex-1 min-h-0 flex flex-col pt-[36px] overflow-hidden">
                <VRuler />
              </div>
            </div>

            <div className="flex-1 min-w-0 flex flex-col">
              <div className="h-[21px] shrink-0 bg-[#f0f0f0] flex items-start pt-[3px] pl-[188px]">
                <HRuler />
              </div>
              <div className="flex-1 min-h-0 bg-[#a9a9a9] border-t-2 border-l border-[#333] pt-[34px] pl-[185px] overflow-hidden">
                <div className="w-[780px] h-[320px] bg-white border-t border-l border-r-2 border-[#111] pl-[35px] font-['Liberation_Serif'] text-[14px] tracking-normal text-[#111]">
                  <div className="h-[35px] -ml-[33px] pt-[3px]"><Para /></div>
                  <div className="w-[353px] h-[82px] border border-[#c4c4c4] leading-[15px] flex flex-col">
                    <div className="h-[17px]">
                      <span className="underline decoration-wavy decoration-[#e04040] decoration-1 underline-offset-2">Formettic</span><Mark />
                    </div>
                    <div className="h-[16px] flex items-center"><Mark /></div>
                    <div className="h-[16px] flex items-center text-[8px]">··<Mark /></div>
                    <div className="h-[16px] flex items-center"><Mark /></div>
                    <div className="h-[14px] flex items-center"><Para /></div>
                  </div>
                  <div className="w-[354px] h-[50px] mt-[76px] ml-[353px] border border-[#c4c4c4] pt-[1px] leading-[16.300px] whitespace-nowrap">
                    <div><span className="bg-[#c0c0c0]">SIMONS</span>·<span className="bg-[#c0c0c0]">ERIC</span><Mark /></div>
                    <div><span className="bg-[#c0c0c0]">Grande, ·80</span><Mark /></div>
                    <div><span className="bg-[#c0c0c0]">6700</span>·<span className="bg-[#c0c0c0]">ARLONARLON</span><Para /></div>
                  </div>
                </div>
              </div>
            </div>

            <div className="w-[15px] shrink-0 bg-[#f0f0f0] flex flex-col items-center">
              <div className="h-[14px] mt-[1px] flex items-center"><Chevron dir="up" /></div>
              <div className="w-[13px] h-[52px] bg-[#cdcdcd]" />
              <div className="flex-1" />
              <div className="h-[14px] flex items-center"><Chevron /></div>
              <div className="mt-[3px] flex flex-col gap-px mb-[1px]">
                <div className="w-[13px] h-[14px] border border-[#c4c4c4] flex items-center justify-center">
                  <svg width="7" height="9" viewBox="0 0 7 9"><path d="M0 .500h7M3.500 1.500L7 5H0zM3.500 4L7 8H0z" fill="#222" stroke="#222" strokeWidth=".4" /></svg>
                </div>
                <div className="w-[13px] h-[14px] border border-[#c4c4c4] flex items-center justify-center">
                  <div className="w-[8px] h-[8px] rounded-full bg-[#4a80b0]" />
                </div>
                <div className="w-[13px] h-[14px] border border-[#c4c4c4] flex items-center justify-center">
                  <svg width="7" height="9" viewBox="0 0 7 9"><path d="M0 8.500h7M3.500 7.500L7 4H0zM3.500 5L7 1H0z" fill="#222" stroke="#222" strokeWidth=".4" /></svg>
                </div>
              </div>
            </div>
          </div>
        </div>

        <div className="w-[7px] shrink-0 bg-white border-l border-[#c8c8c8] flex flex-col items-center">
          <div className="mt-[240px] border-l-2 border-dotted border-[#aaa] h-[16px]" />
        </div>
      </div>

      <div className="h-[15px] shrink-0 bg-[#cdcdcd] flex items-center border-t border-[#e8e8e8]">
        <div className="w-[26px] bg-[#f0f0f0] h-[14px] flex items-center justify-center">
          <svg width="7" height="10" viewBox="0 0 7 10"><path d="M6 1L2 5l4 4" fill="none" stroke="#606060" strokeWidth="1.600" /></svg>
        </div>
        <div className="flex-1" />
        <div className="w-[30px] bg-[#f0f0f0] h-[14px] flex items-center pl-[5px]">
          <svg width="7" height="10" viewBox="0 0 7 10"><path d="M1 1l4 4-4 4" fill="none" stroke="#606060" strokeWidth="1.600" /></svg>
        </div>
      </div>

      <div className="h-[19px] shrink-0 bg-[#f0f0f0] border-t border-[#e4e4e4] flex items-center pt-[3px]">
        <span className="w-[197px] pl-[9px]">Page 1 / 2</span>
        <StatusSep />
        <span className="w-[188px] pl-[3px]">Enveloppe</span>
        <StatusSep />
        <span className="w-[219px] text-center">Français (France)</span>
        <StatusSep />
        <span className="w-[27px] pl-[3px]">INS</span>
        <StatusSep />
        <span className="w-[29px] pl-[3px]">STD</span>
        <StatusSep />
        <span className="w-[13px] pl-[3px]">*</span>
        <StatusSep />
        <span className="w-[25px]" />
        <StatusSep />
        <span className="w-[259px]" />
        <StatusSep />
        <div className="w-[65px] flex items-center pl-[7px] gap-[7px]">
          <S s={12}><path d="M3 1.500h7l3 3v10H3z" fill="#fff" stroke="#7b8790" /></S>
          <S s={15}><path d="M1 2.500h6.500v11H1zM8.500 2.500H15v11H8.500z" fill="#cfe3f2" stroke="#5c8db5" /></S>
          <S s={15}><path d="M1 3.500h6.500v10H1zM8.500 3.500H15v10H8.500z" fill="#fff" stroke="#9aa5ad" /></S>
        </div>
        <StatusSep />
        <div className="w-[127px] flex items-center pl-[4px]">
          <div className="w-[10px] h-[10px] rounded-full border border-[#666] flex items-center justify-center">
            <div className="w-[6px] h-px bg-[#333]" />
          </div>
          <div className="relative w-[86px] h-[10px] mx-[5px] flex items-center">
            <div className="w-full h-px bg-[#888]" />
            <div className="absolute left-[25px] top-0 w-px h-[10px] bg-[#999]" />
            <div className="absolute left-[39px] top-[1px] w-[8px] h-[8px] rounded-full bg-[#4a80b0] border border-[#345c80]" />
          </div>
          <div className="w-[10px] h-[10px] rounded-full border border-[#4a80b0] bg-[#dcebf5] flex items-center justify-center text-[9px] leading-none text-[#234]">+</div>
        </div>
        <StatusSep />
        <span className="pl-[4px]">101 %</span>
      </div>
    </div>
  )
}
